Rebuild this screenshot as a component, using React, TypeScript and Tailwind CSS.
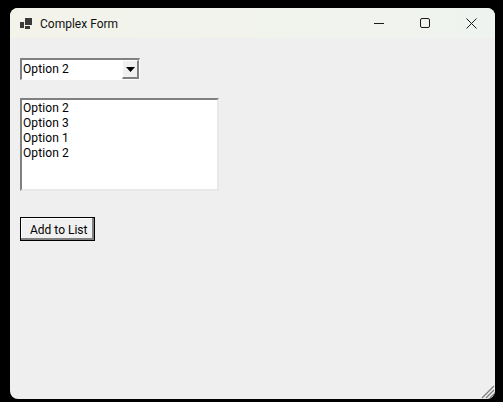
const FONT = "font-['Roboto','Open_Sans',sans-serif]";

const ITEMS = ["Option 2", "Option 3", "Option 1", "Option 2"];

function AppIcon() {
  return (
    <svg width="12" height="11" viewBox="0 0 12 11" className="shrink-0">
      <rect x="0" y="4" width="4" height="6" fill="#3a3a3a" />
      <rect x="5" y="0" width="7" height="7" fill="#3a3a3a" />
      <rect x="5" y="8" width="5" height="3" fill="#3a3a3a" />
    </svg>
  );
}

function TitleBar() {
  return (
    <div className="flex h-[30px] shrink-0 items-center bg-linear-to-r from-[#f3f3ea] to-[#eff3ef] pl-[10px]">
      <AppIcon />
      <span className="ml-2 pt-px text-[12px] text-[#111]">Complex Form</span>
      <div className="ml-auto mr-px flex items-center">
        <div className="flex w-[46px] justify-center">
          <svg width="10" height="10" viewBox="0 0 10 10">
            <path d="M0 5.5H10" stroke="#1a1a1a" strokeWidth="1" />
          </svg>
        </div>
        <div className="flex w-[46px] justify-center">
          <svg width="10" height="10" viewBox="0 0 10 10">
            <rect x="0.5" y="0.5" width="9" height="9" rx="1.5" fill="none" stroke="#1a1a1a" />
          </svg>
        </div>
        <div className="flex w-[46px] justify-center">
          <svg width="11" height="11" viewBox="0 0 11 11">
            <path d="M0.5 0.5L10.5 10.5M10.5 0.5L0.5 10.5" stroke="#1a1a1a" strokeWidth="1" />
          </svg>
        </div>
      </div>
    </div>
  );
}

function Combo() {
  return (
    <div className="flex h-[22px] w-[120px] border-t-2 border-l-2 border-r border-b border-t-[#808080] border-l-[#808080] border-r-white border-b-white bg-white">
      <div className="flex-1 pl-px text-[12px] leading-[18px] tracking-[0.1px] text-black">Option 2</div>
      <div className="flex w-[17px] items-center justify-center border-t border-l border-r-2 border-b-2 border-t-white border-l-white border-r-[#808080] border-b-[#808080] bg-[#f0f0f0]">
        <svg width="9" height="5" viewBox="0 0 9 5">
          <path d="M0 0H9L4.5 5Z" fill="#000" />
        </svg>
      </div>
    </div>
  );
}

export default function App() {
  return (
    <div className={`h-[402px] w-[503px] overflow-hidden bg-black pl-[10px] pt-[8px] ${FONT}`}>
      <div className="relative flex h-[391px] w-[485px] flex-col overflow-hidden rounded-lg bg-[#efefef]">
        <TitleBar />
        <div className="flex flex-col items-start pl-[10px] pt-[20px]">
          <Combo />
          <div className="mt-[18px] h-[93px] w-[199px] border-2 border-t-[#808080] border-l-[#808080] border-r-[#e8e8e8] border-b-[#e8e8e8] bg-white pl-px pt-px">
            {ITEMS.map((item, i) => (
              <div key={i} className="h-[15px] text-[12px] leading-[15px] tracking-[0.1px] text-black">
                {item}
              </div>
            ))}
          </div>
          <button
            type="button"
            className="mt-[26px] h-[24px] w-[75px] border border-black bg-[#f0f0f0] pl-[9px] pt-[2px] text-left text-[12px] text-black shadow-[inset_-2px_-2px_0_#808080,inset_1px_1px_0_#fff]"
          >
            Add to List
          </button>
        </div>
        {/* resize grip */}
        <svg width="14" height="14" viewBox="0 0 14 14" className="absolute bottom-0 right-0">
          <path d="M13 1L1 13M13 5L5 13M13 9L9 13" stroke="#7d7d7d" strokeWidth="1.3" />
        </svg>
      </div>
    </div>
  );
}
